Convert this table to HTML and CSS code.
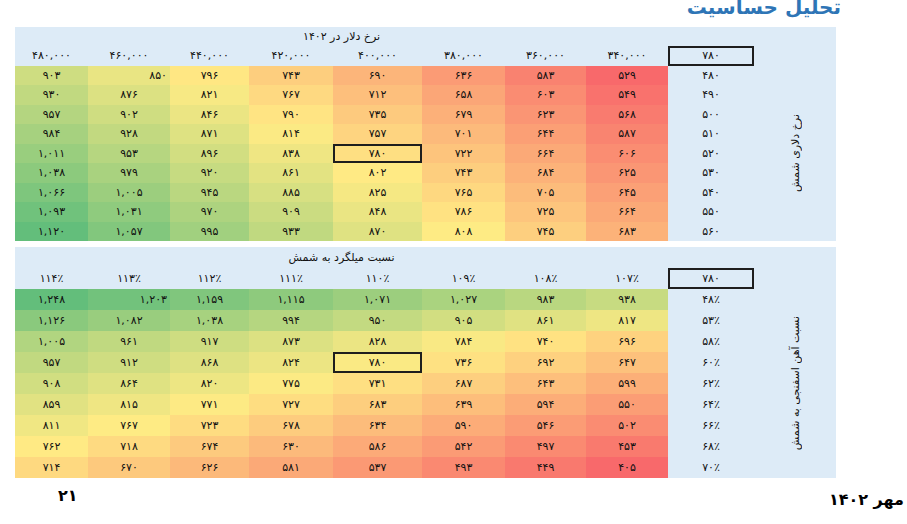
FILE: index.html
```html
<!DOCTYPE html>
<html lang="fa">
<head>
<meta charset="utf-8">
<title>تحلیل حساسیت</title>
<link rel="stylesheet" href="styles.css">
</head>
<body>
<div class="page">
  <h1 class="title" dir="rtl">تحلیل حساسیت</h1>

  <section class="block heat block-top">
    <div class="caption" dir="rtl">نرخ دلار در ۱۴۰۲</div>
    <div class="spacer"></div>
    <div class="h">۴۸۰,۰۰۰</div><div class="h">۴۶۰,۰۰۰</div><div class="h">۴۴۰,۰۰۰</div><div class="h">۴۲۰,۰۰۰</div><div class="h">۴۰۰,۰۰۰</div><div class="h">۳۸۰,۰۰۰</div><div class="h">۳۶۰,۰۰۰</div><div class="h">۳۴۰,۰۰۰</div>
    <div class="h box">۷۸۰</div><div class="h"></div>
    <div class="side"><span dir="rtl">نرخ دلاری شمش</span></div>

    <div class="v">۹۰۳</div><div class="v r">۸۵۰</div><div class="v">۷۹۶</div><div class="v">۷۴۳</div><div class="v">۶۹۰</div><div class="v">۶۳۶</div><div class="v">۵۸۳</div><div class="v">۵۲۹</div><div class="k">۴۸۰</div>
    <div class="v">۹۳۰</div><div class="v">۸۷۶</div><div class="v">۸۲۱</div><div class="v">۷۶۷</div><div class="v">۷۱۲</div><div class="v">۶۵۸</div><div class="v">۶۰۳</div><div class="v">۵۴۹</div><div class="k">۴۹۰</div>
    <div class="v">۹۵۷</div><div class="v">۹۰۲</div><div class="v">۸۴۶</div><div class="v">۷۹۰</div><div class="v">۷۳۵</div><div class="v">۶۷۹</div><div class="v">۶۲۳</div><div class="v">۵۶۸</div><div class="k">۵۰۰</div>
    <div class="v">۹۸۴</div><div class="v">۹۲۸</div><div class="v">۸۷۱</div><div class="v">۸۱۴</div><div class="v">۷۵۷</div><div class="v">۷۰۱</div><div class="v">۶۴۴</div><div class="v">۵۸۷</div><div class="k">۵۱۰</div>
    <div class="v">۱,۰۱۱</div><div class="v">۹۵۳</div><div class="v">۸۹۶</div><div class="v">۸۳۸</div><div class="v hit">۷۸۰</div><div class="v">۷۲۲</div><div class="v">۶۶۴</div><div class="v">۶۰۶</div><div class="k">۵۲۰</div>
    <div class="v">۱,۰۳۸</div><div class="v">۹۷۹</div><div class="v">۹۲۰</div><div class="v">۸۶۱</div><div class="v">۸۰۲</div><div class="v">۷۴۳</div><div class="v">۶۸۴</div><div class="v">۶۲۵</div><div class="k">۵۳۰</div>
    <div class="v">۱,۰۶۶</div><div class="v">۱,۰۰۵</div><div class="v">۹۴۵</div><div class="v">۸۸۵</div><div class="v">۸۲۵</div><div class="v">۷۶۵</div><div class="v">۷۰۵</div><div class="v">۶۴۵</div><div class="k">۵۴۰</div>
    <div class="v">۱,۰۹۳</div><div class="v">۱,۰۳۱</div><div class="v">۹۷۰</div><div class="v">۹۰۹</div><div class="v">۸۴۸</div><div class="v">۷۸۶</div><div class="v">۷۲۵</div><div class="v">۶۶۴</div><div class="k">۵۵۰</div>
    <div class="v">۱,۱۲۰</div><div class="v">۱,۰۵۷</div><div class="v">۹۹۵</div><div class="v">۹۳۳</div><div class="v">۸۷۰</div><div class="v">۸۰۸</div><div class="v">۷۴۵</div><div class="v">۶۸۳</div><div class="k">۵۶۰</div>
  </section>

  <section class="block heat block-bottom">
    <div class="caption" dir="rtl">نسبت میلگرد به شمش</div>
    <div class="spacer"></div>
    <div class="h">۱۱۴٪</div><div class="h">۱۱۳٪</div><div class="h">۱۱۲٪</div><div class="h">۱۱۱٪</div><div class="h">۱۱۰٪</div><div class="h">۱۰۹٪</div><div class="h">۱۰۸٪</div><div class="h">۱۰۷٪</div>
    <div class="h box">۷۸۰</div><div class="h"></div>
    <div class="side"><span dir="rtl">نسبت آهن اسفنجی به شمش</span></div>

    <div class="v">۱,۲۴۸</div><div class="v r">۱,۲۰۳</div><div class="v">۱,۱۵۹</div><div class="v">۱,۱۱۵</div><div class="v">۱,۰۷۱</div><div class="v">۱,۰۲۷</div><div class="v">۹۸۳</div><div class="v">۹۳۸</div><div class="k">۴۸٪</div>
    <div class="v">۱,۱۲۶</div><div class="v">۱,۰۸۲</div><div class="v">۱,۰۳۸</div><div class="v">۹۹۴</div><div class="v">۹۵۰</div><div class="v">۹۰۵</div><div class="v">۸۶۱</div><div class="v">۸۱۷</div><div class="k">۵۳٪</div>
    <div class="v">۱,۰۰۵</div><div class="v">۹۶۱</div><div class="v">۹۱۷</div><div class="v">۸۷۳</div><div class="v">۸۲۸</div><div class="v">۷۸۴</div><div class="v">۷۴۰</div><div class="v">۶۹۶</div><div class="k">۵۸٪</div>
    <div class="v">۹۵۷</div><div class="v">۹۱۲</div><div class="v">۸۶۸</div><div class="v">۸۲۴</div><div class="v hit">۷۸۰</div><div class="v">۷۳۶</div><div class="v">۶۹۲</div><div class="v">۶۴۷</div><div class="k">۶۰٪</div>
    <div class="v">۹۰۸</div><div class="v">۸۶۴</div><div class="v">۸۲۰</div><div class="v">۷۷۵</div><div class="v">۷۳۱</div><div class="v">۶۸۷</div><div class="v">۶۴۳</div><div class="v">۵۹۹</div><div class="k">۶۲٪</div>
    <div class="v">۸۵۹</div><div class="v">۸۱۵</div><div class="v">۷۷۱</div><div class="v">۷۲۷</div><div class="v">۶۸۳</div><div class="v">۶۳۹</div><div class="v">۵۹۴</div><div class="v">۵۵۰</div><div class="k">۶۴٪</div>
    <div class="v">۸۱۱</div><div class="v">۷۶۷</div><div class="v">۷۲۳</div><div class="v">۶۷۸</div><div class="v">۶۳۴</div><div class="v">۵۹۰</div><div class="v">۵۴۶</div><div class="v">۵۰۲</div><div class="k">۶۶٪</div>
    <div class="v">۷۶۲</div><div class="v">۷۱۸</div><div class="v">۶۷۴</div><div class="v">۶۳۰</div><div class="v">۵۸۶</div><div class="v">۵۴۲</div><div class="v">۴۹۷</div><div class="v">۴۵۳</div><div class="k">۶۸٪</div>
    <div class="v">۷۱۴</div><div class="v">۶۷۰</div><div class="v">۶۲۶</div><div class="v">۵۸۱</div><div class="v">۵۳۷</div><div class="v">۴۹۳</div><div class="v">۴۴۹</div><div class="v">۴۰۵</div><div class="k">۷۰٪</div>
  </section>

  <footer class="foot">
    <span class="pg">۲۱</span>
    <span class="date" dir="rtl">مهر ۱۴۰۲</span>
  </footer>
</div>
<script src="script.js"></script>
</body>
</html>
```

FILE: styles.css
```css
* { box-sizing: border-box; }
html, body { margin: 0; padding: 0; background: #fff; }
body {
  width: 907px;
  height: 524px;
  overflow: hidden;
  font-family: "DejaVu Sans", "Noto Sans", sans-serif;
  color: #111;
}

.title {
  margin: -3px 66px 0 0;
  font-size: 20px;
  line-height: 20px;
  font-weight: bold;
  color: #2e75b6;
  text-align: right;
  height: 20px;
}

.block {
  margin-left: 15px;
  width: 821px;
  display: grid;
  grid-template-columns: 73px 82px 79px 84px 89px 83px 81px 82px 86px 82px;
  background: #ddebf7;
  font-size: 11px;
}
.block-top { margin-top: 9.5px; grid-auto-rows: 19.5px; }
.block-bottom { margin-top: 6px; grid-auto-rows: 21px; }

.caption {
  grid-column: 1 / 9;
  display: flex;
  align-items: center;
  justify-content: center;
}
.spacer { grid-column: span 2; }

.h, .v, .k {
  display: flex;
  align-items: center;
  justify-content: center;
  white-space: nowrap;
}
.v.r { justify-content: flex-end; padding-right: 3px; }

.box, .hit { border: 2px solid #1e1e1e; }

.side {
  grid-column: 10;
  grid-row: 3 / span 9;
  display: flex;
  align-items: center;
  justify-content: center;
}
.side span {
  writing-mode: vertical-rl;
  transform: rotate(180deg);
  font-size: 11px;
  white-space: nowrap;
}

.foot {
  margin-top: 9px;
  display: flex;
  justify-content: space-between;
  align-items: flex-start;
  padding: 0 3px 0 58px;
  font-weight: bold;
  color: #000;
}
.pg { font-size: 16px; line-height: 18px; }
.date { font-size: 16px; line-height: 22px; margin-top: 2px; }
```

FILE: script.js
```js
(function () {
  var lo = [248, 105, 107], mid = [255, 235, 132], hi = [99, 190, 123];
  var fa = '۰۱۲۳۴۵۶۷۸۹';
  function num(s) {
    var r = '';
    for (var i = 0; i < s.length; i++) {
      var d = fa.indexOf(s[i]);
      if (d >= 0) r += d;
    }
    return +r;
  }
  document.querySelectorAll('.heat').forEach(function (g) {
    var cells = Array.prototype.slice.call(g.querySelectorAll('.v'));
    var vals = cells.map(function (c) { return num(c.textContent); });
    var s = vals.slice().sort(function (a, b) { return a - b; });
    var n = s.length, p = (n - 1) * 0.5, k = Math.floor(p);
    var med = s[k] + (s[Math.min(k + 1, n - 1)] - s[k]) * (p - k);
    var mn = s[0], mx = s[n - 1];
    cells.forEach(function (c, i) {
      var v = vals[i], a, b, t;
      if (v <= med) { a = lo; b = mid; t = (v - mn) / (med - mn); }
      else { a = mid; b = hi; t = (v - med) / (mx - med); }
      var col = a.map(function (x, j) { return Math.round(x + (b[j] - x) * t); });
      c.style.backgroundColor = 'rgb(' + col.join(',') + ')';
    });
  });
})();
```
